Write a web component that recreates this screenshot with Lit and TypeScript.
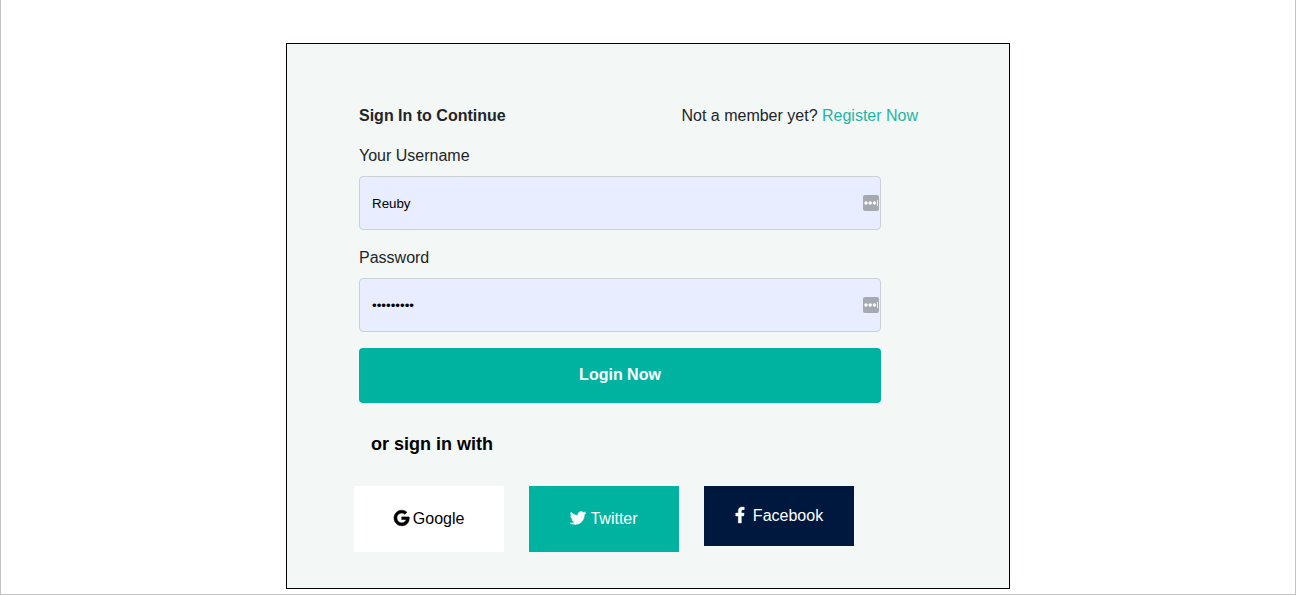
import { LitElement, html, css, svg } from "lit";
import { customElement, property } from "lit/decorators.js";

const icons = {
  google: {
    box: "0 0 488 512",
    path: "M488 261.8C488 403.3 391.1 504 248 504 110.8 504 0 393.2 0 256S110.8 8 248 8c66.8 0 123 24.5 166.3 64.9l-67.5 64.9C258.5 52.6 94.3 116.6 94.3 256c0 86.5 69.1 156.6 153.7 156.6 98.2 0 135-70.4 140.8-106.9H248v-85.3h236.1c2.3 12.7 3.9 24.9 3.9 41.4z",
    outline: 18,
  },
  twitter: {
    box: "0 0 512 512",
    path: "M459.37 151.716c.325 4.548.325 9.097.325 13.645 0 138.72-105.583 298.558-298.558 298.558-59.452 0-114.68-17.219-161.137-47.106 8.447.974 16.568 1.299 25.34 1.299 49.055 0 94.213-16.568 130.274-44.832-46.132-.975-84.792-31.188-98.112-72.772 6.498.974 12.995 1.624 19.818 1.624 9.421 0 18.843-1.3 27.614-3.573-48.081-9.747-84.143-51.98-84.143-102.985v-1.299c13.969 7.797 30.214 12.67 47.431 13.319-28.264-18.843-46.781-51.005-46.781-87.391 0-19.492 5.197-37.36 14.294-52.954 51.655 63.675 129.3 105.258 216.365 109.807-1.624-7.797-2.599-15.918-2.599-24.04 0-57.828 46.782-104.934 104.934-104.934 30.213 0 57.502 12.67 76.67 33.137 23.715-4.548 46.456-13.32 66.599-25.34-7.798 24.366-24.366 44.833-46.132 57.827 21.117-2.273 41.584-8.122 60.426-16.243-14.292 20.791-32.161 39.308-52.628 54.253z",
    outline: 12,
  },
  facebook: {
    box: "0 0 320 512",
    path: "M279.14 288l14.22-92.66h-88.91v-60.13c0-25.35 12.42-50.06 52.24-50.06h40.42V6.26S260.43 0 225.36 0c-73.22 0-121.08 44.38-121.08 124.72v70.62H22.89V288h81.39v224h100.17V288z",
    outline: 12,
  },
};

@customElement("brand-icon")
class BrandIcon extends LitElement {
  @property() name: keyof typeof icons = "google";

  static styles = css`
    :host {
      display: flex;
      padding-bottom: 2px;
    }
    .glyph {
      display: block;
      height: 16px;
      width: auto;
      overflow: visible;
      fill: currentColor;
      stroke: currentColor;
    }
  `;

  render() {
    const icon = icons[this.name];
    return html`<svg class="glyph" viewBox=${icon.box} aria-hidden="true">
      ${svg`<path d=${icon.path} stroke-width=${icon.outline}></path>`}
    </svg>`;
  }
}

@customElement("app-root")
class AppRoot extends LitElement {
  static styles = css`
    :host {
      display: block;
      font: 16px/24px "Liberation Sans", Arial, sans-serif;
      color: #212529;
    }
    * {
      box-sizing: border-box;
    }
    .page {
      min-height: 100vh;
      padding: 43px 16px 5px;
      border: solid #c4c4c4;
      border-width: 0 1px 1px;
      background: #fff;
    }
    .card {
      max-width: 724px;
      margin: 0 auto;
      padding: 60px 67px 36px;
      border: 1px solid #000;
      background: #f3f7f6;
    }
    .form {
      padding: 0 5px;
    }
    .header {
      display: flex;
      flex-wrap: wrap;
      justify-content: space-between;
      padding-right: 19px;
      margin-bottom: 16px;
    }
    .title {
      margin: 0;
      font-size: 16px;
      line-height: 24px;
    }
    .member {
      margin: 0;
    }
    .register {
      color: #1fb5a5;
      text-decoration: none;
    }
    .fields {
      display: flex;
      flex-direction: column;
      gap: 16px;
      max-width: 522px;
    }
    .field {
      display: flex;
      flex-direction: column;
      gap: 8px;
    }
    .control {
      position: relative;
    }
    .input {
      display: block;
      width: 100%;
      height: 54px;
      padding: 0 20px 0 12px;
      border: 1px solid #ced0d8;
      border-radius: 4px;
      background: #e8edff;
      font-family: inherit;
      color: #000;
    }
    .keys {
      position: absolute;
      top: 19px;
      right: 2px;
      width: 16px;
      height: 16px;
    }
    .login {
      height: 55px;
      padding: 0 0 2px;
      border: 0;
      border-radius: 4px;
      background: #00b3a1;
      color: #fff;
      font: inherit;
      font-weight: bold;
      cursor: pointer;
    }
    .subtitle {
      margin: 28px 0;
      padding-left: 12px;
      font-size: 18px;
      line-height: 27px;
      color: #000;
    }
    .social {
      display: flex;
      flex-wrap: wrap;
      align-items: flex-start;
      gap: 25px;
    }
    .provider {
      display: flex;
      align-items: center;
      justify-content: center;
      gap: 4px;
      width: 150px;
      height: 66px;
      padding: 0;
      border: 0;
      font: inherit;
      cursor: pointer;
    }
    .google {
      background: #fff;
      color: #000;
    }
    .twitter {
      background: #00b3a1;
      color: #fff;
    }
    .facebook {
      gap: 8px;
      height: 60px;
      background: #00173e;
      color: #fff;
    }
  `;

  private keyBadge() {
    return html`<svg class="keys" viewBox="0 0 16 16" aria-hidden="true">
      <rect width="16" height="16" rx="2" fill="#a7a9b0"></rect>
      <g fill="#fff">
        <circle cx="3" cy="8" r="1.7"></circle>
        <circle cx="7.2" cy="8" r="1.7"></circle>
        <circle cx="11.4" cy="8" r="1.7"></circle>
        <rect x="14" y="5" width="0.8" height="6"></rect>
      </g>
    </svg>`;
  }

  private field(id: string, label: string, type: string, value: string) {
    return html`<div class="field">
      <label for=${id}>${label}</label>
      <div class="control">
        <input class="input" id=${id} type=${type} .value=${value} />
        ${this.keyBadge()}
      </div>
    </div>`;
  }

  render() {
    return html`<main class="page">
      <section class="card">
        <form class="form" @submit=${(e: Event) => e.preventDefault()}>
          <div class="header">
            <h1 class="title">Sign In to Continue</h1>
            <p class="member">
              Not a member yet? <a class="register" href="#">Register Now</a>
            </p>
          </div>
          <div class="fields">
            ${this.field("username", "Your Username", "text", "Reuby")}
            ${this.field("password", "Password", "password", "reuby1234")}
            <button class="login" type="submit">Login Now</button>
          </div>
          <h2 class="subtitle">or sign in with</h2>
        </form>
        <div class="social">
          <button class="provider google" type="button">
            <brand-icon name="google"></brand-icon>Google
          </button>
          <button class="provider twitter" type="button">
            <brand-icon name="twitter"></brand-icon>Twitter
          </button>
          <button class="provider facebook" type="button">
            <brand-icon name="facebook"></brand-icon>Facebook
          </button>
        </div>
      </section>
    </main>`;
  }
}
